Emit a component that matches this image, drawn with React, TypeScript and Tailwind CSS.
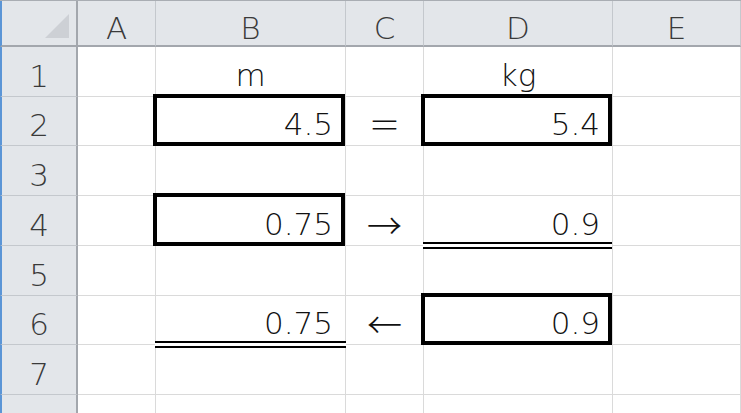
import React from "react";

const FONT = { fontFamily: '"DejaVu Sans", "Liberation Sans", sans-serif' };
const CJK = { fontFamily: '"Noto Sans CJK JP", "DejaVu Sans", sans-serif' };

type Cell = {
  text?: string;
  align?: "left" | "center" | "right";
  box?: boolean;
  dbl?: "b" | "d";
  sym?: "eq" | "arrow";
};

const rows: { h: string; cells: Cell[] }[] = [
  { h: "h-[50px]", cells: [{}, { text: "m", align: "center" }, {}, { text: "kg", align: "center" }, {}] },
  {
    h: "h-[49px]",
    cells: [{}, { text: "4.5", align: "right", box: true }, { text: "＝", align: "center", sym: "eq" }, { text: "5.4", align: "right", box: true }, {}],
  },
  { h: "h-[50px]", cells: [{}, {}, {}, {}, {}] },
  {
    h: "h-[50px]",
    cells: [{}, { text: "0.75", align: "right", box: true }, { text: "→", align: "center", sym: "arrow" }, { text: "0.9", align: "right", dbl: "d" }, {}],
  },
  { h: "h-[50px]", cells: [{}, {}, {}, {}, {}] },
  {
    h: "h-[49px]",
    cells: [{}, { text: "0.75", align: "right", dbl: "b" }, { text: "←", align: "center", sym: "arrow" }, { text: "0.9", align: "right", box: true }, {}],
  },
  { h: "h-[50px]", cells: [{}, {}, {}, {}, {}] },
  { h: "h-[50px]", cells: [{}, {}, {}, {}, {}] },
];

const widths = ["w-[78px]", "w-[190px]", "w-[78px]", "w-[189px]", "w-[128px]"];
const letters = ["A", "B", "C", "D", "E"];

export default function App() {
  return (
    <div className="w-[741px] h-[413px] overflow-hidden bg-white relative" style={FONT}>
      {/* header row */}
      <div className="flex h-[47px] border-t border-[#a9adb3]">
        <div className="w-[78px] shrink-0 bg-[#e3e6ea] border-l-2 border-l-[#5b95d6] border-r-2 border-r-[#a3a7ad] border-b-2 border-b-[#a3a7ad] relative">
          <svg className="absolute left-[42px] top-[12px]" width="26" height="26" viewBox="0 0 26 26">
            <polygon points="1,25 25,25 25,1" fill="#cdd0d5" />
          </svg>
        </div>
        {letters.map((l, i) => (
          <div
            key={l}
            className={`${widths[i]} shrink-0 bg-[#e3e6ea] border-r border-r-[#c4c8cd] border-b-2 border-b-[#a3a7ad] flex items-end justify-center text-[31px] leading-none font-extralight text-[#3a3a3a] pb-[1px]`}
          >
            {l}
          </div>
        ))}
      </div>
      {rows.map((r, ri) => (
        <div key={ri} className={`flex ${r.h}`}>
          <div className="w-[78px] shrink-0 bg-[#e3e6ea] border-l-2 border-l-[#5b95d6] border-r-2 border-r-[#a3a7ad] border-b border-b-[#c4c8cd] flex items-end justify-center text-[31px] leading-none font-extralight text-[#3a3a3a] pb-[4px]">
            {ri + 1}
          </div>
          {r.cells.map((c, ci) => (
            <div
              key={ci}
              className={`${widths[ci]} shrink-0 relative border-r border-b border-[#dadada] flex items-end text-[31px] leading-none font-extralight text-[#111] pb-[5px] ${
                c.align === "right" ? "justify-end pr-[12px]" : "justify-center"
              }`}
            >
              {c.box && <div className="absolute z-10 -top-[3px] -left-[3px] right-0 -bottom-[1px] border-4 border-black" />}
              {c.dbl && (
                <div
                  className={`absolute z-10 -bottom-[4px] -left-[1px] ${c.dbl === "b" ? "-right-[1px]" : "right-0"} h-[7px] bg-white border-y-2 border-black`}
                />
              )}
              {c.sym === "eq" && (
                <span className="relative z-20 text-[32px] font-light mb-[1px]" style={CJK}>
                  {c.text}
                </span>
              )}
              {c.sym === "arrow" && (
                <span className="relative z-20 text-[35px] font-light -mb-[1px]" style={CJK}>
                  {c.text}
                </span>
              )}
              {!c.sym && c.text && <span className="relative z-20">{c.text}</span>}
            </div>
          ))}
        </div>
      ))}
    </div>
  );
}
